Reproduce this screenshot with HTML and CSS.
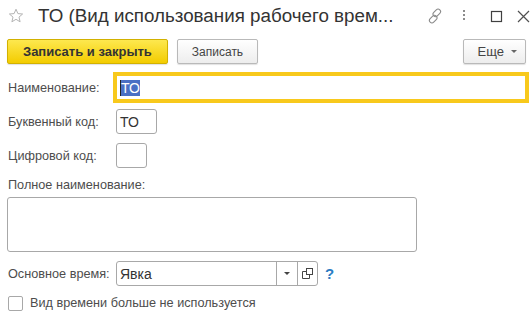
FILE: index.html
```html
<!DOCTYPE html>
<html lang="ru">
<head>
    <meta charset="UTF-8">
    <title>ТО (Вид использования рабочего времени)</title>
    <link rel="stylesheet" href="styles.css">
</head>
<body>
    <!-- Title bar -->
    <header class="title-bar">
        <svg class="star" width="16" height="16" viewBox="0 0 16 16">
            <polygon points="8,1.2 9.9,5.6 14.6,6 11,9.1 12.1,13.8 8,11.3 3.9,13.8 5,9.1 1.4,6 6.1,5.6" fill="none" stroke="#b4b4b4" stroke-width="1"/>
        </svg>
        <h1 class="title">ТО (Вид использования рабочего врем...</h1>
        <div class="title-actions">
            <span class="title-icon icon-link">
                <svg width="16" height="16" viewBox="0 0 16 16">
                    <g fill="none" stroke="#8a8a8a" stroke-width="1.1">
                        <rect x="7.3" y="0.6" width="5" height="8.5" rx="2.5" transform="rotate(45 9.8 4.85)"/>
                        <rect x="3.7" y="6.9" width="5" height="8.5" rx="2.5" transform="rotate(45 6.2 11.15)"/>
                    </g>
                </svg>
            </span>
            <span class="title-icon icon-menu">
                <svg width="4" height="14" viewBox="0 0 4 14">
                    <g fill="#8c8c8c">
                        <rect x="1" y="1" width="2" height="2"/>
                        <rect x="1" y="5" width="2" height="2"/>
                        <rect x="1" y="9" width="2" height="2"/>
                    </g>
                </svg>
            </span>
            <span class="title-icon icon-max">
                <svg width="13" height="13" viewBox="0 0 13 13">
                    <rect x="1.5" y="1.5" width="10" height="10" fill="none" stroke="#404040" stroke-width="1.2"/>
                </svg>
            </span>
            <span class="title-icon icon-close">
                <svg width="13" height="13" viewBox="0 0 13 13">
                    <path d="M1 1 L12 12 M12 1 L1 12" stroke="#505050" stroke-width="1.2"/>
                </svg>
            </span>
        </div>
    </header>

    <!-- Command bar -->
    <div class="toolbar">
        <button class="btn btn-default">Записать и закрыть</button>
        <button class="btn">Записать</button>
        <button class="btn btn-more">Еще <span class="caret"></span></button>
    </div>

    <!-- Form -->
    <form class="form">
        <div class="form-row">
            <label class="form-label">Наименование:</label>
            <div class="input input-focused"><span class="selection">ТО</span></div>
        </div>

        <div class="form-row">
            <label class="form-label">Буквенный код:</label>
            <div class="input input-code">ТО</div>
        </div>

        <div class="form-row">
            <label class="form-label">Цифровой код:</label>
            <div class="input input-num"></div>
        </div>

        <label class="form-label block-label">Полное наименование:</label>
        <div class="textarea"></div>

        <div class="form-row">
            <label class="form-label">Основное время:</label>
            <div class="input select">
                <span class="select-value">Явка</span>
                <span class="select-btn"><span class="caret dark"></span></span>
                <span class="select-btn open-btn">
                    <svg width="11" height="11" viewBox="0 0 11 11">
                        <g fill="none" stroke="#444" stroke-width="1">
                            <rect x="4.5" y="0.5" width="6" height="6"/>
                            <path d="M4 3.5 H0.5 V10.5 H7.5 V7"/>
                        </g>
                    </svg>
                </span>
            </div>
            <span class="help">?</span>
        </div>

        <div class="check-row">
            <span class="checkbox"></span>
            <span>Вид времени больше не используется</span>
        </div>
    </form>
</body>
</html>
```

FILE: styles.css
```css
* {
    margin: 0;
    padding: 0;
    box-sizing: border-box;
}

:root {
    --text-color: #4d4d4d;
    --value-color: #333333;
    --border-color: #a8a8a8;
    --focus-color: #f8c91c;
}

body {
    width: 532px;
    height: 317px;
    overflow: hidden;
    background: #ffffff;
    color: var(--text-color);
    font-family: "Liberation Sans", Arial, sans-serif;
    font-size: 12.7px;
}

/* Title bar */
.title-bar {
    display: flex;
    align-items: center;
    height: 32px;
    padding-left: 8px;
}

.star {
    margin-right: 14px;
}

.title {
    flex: 1;
    font-size: 18.8px;
    font-weight: normal;
    color: #333;
    white-space: nowrap;
}

.title-actions {
    display: flex;
    align-items: center;
}

.title-icon {
    display: flex;
    align-items: center;
    justify-content: center;
    height: 24px;
}

.icon-link { width: 28px; }
.icon-menu { width: 30px; }
.icon-max { width: 35px; }
.icon-close { width: 18px; }

/* Toolbar */
.toolbar {
    display: flex;
    align-items: center;
    padding: 7px 6px 0 7px;
}

.btn {
    height: 25px;
    padding: 0 14px;
    border: 1px solid #b9b9b9;
    border-radius: 2px;
    background: linear-gradient(#ffffff, #ededed);
    box-shadow: 0 1px 1px rgba(0, 0, 0, 0.12);
    color: #444;
    font-family: inherit;
    font-size: 12px;
}

.btn + .btn {
    margin-left: 9px;
}

.btn-default {
    padding: 0 15px;
    border-color: #d2b100;
    background: linear-gradient(#fde84f, #f3cc00);
    color: #333;
    font-size: 13px;
    font-weight: bold;
}

.btn-more {
    margin-left: auto !important;
    padding: 0 8px 0 14px;
    display: flex;
    align-items: center;
    font-size: 13px;
}

.caret {
    display: inline-block;
    margin-left: 7px;
    border-left: 3px solid transparent;
    border-right: 3px solid transparent;
    border-top: 3px solid #666;
}

.caret.dark {
    margin: 0;
    border-top-color: #444;
}

/* Form */
.form {
    padding: 11px 6px 0 8px;
}

.form-row {
    display: flex;
    align-items: center;
    height: 25px;
    margin-bottom: 9px;
}

.form-label {
    width: 108px;
    flex-shrink: 0;
}

.input {
    height: 25px;
    border: 1px solid var(--border-color);
    border-radius: 3px;
    padding: 0 3px;
    color: var(--value-color);
    display: flex;
    align-items: center;
    font-size: 14px;
}

.input-focused {
    flex: 1;
    border-color: var(--focus-color);
    outline: 3px solid var(--focus-color);
    border-radius: 0;
}

.selection {
    background: #4a6fc4;
    color: #fff;
    line-height: 16px;
    border-left: 1px solid #222;
}

.input-code {
    width: 41px;
}

.input-num {
    width: 31px;
}

.block-label {
    display: block;
    width: auto;
    line-height: 16px;
    margin-bottom: 4px;
}

.textarea {
    width: 410px;
    height: 55px;
    margin-left: -1px;
    margin-bottom: 9px;
    border: 1px solid var(--border-color);
    border-radius: 3px;
}

.select {
    width: 202px;
    padding: 0;
}

.select-value {
    flex: 1;
    padding-left: 3px;
}

.select-btn {
    display: flex;
    align-items: center;
    justify-content: center;
    width: 21px;
    height: 100%;
    border-left: 1px solid var(--border-color);
}

.open-btn {
    width: 20px;
}

.help {
    margin-left: 7px;
    color: #2b7cc3;
    font-weight: bold;
    font-size: 15px;
}

.check-row {
    display: flex;
    align-items: center;
    height: 16px;
}

.checkbox {
    width: 15px;
    height: 15px;
    margin-right: 7px;
    border: 1px solid var(--border-color);
    border-radius: 2px;
}
```
